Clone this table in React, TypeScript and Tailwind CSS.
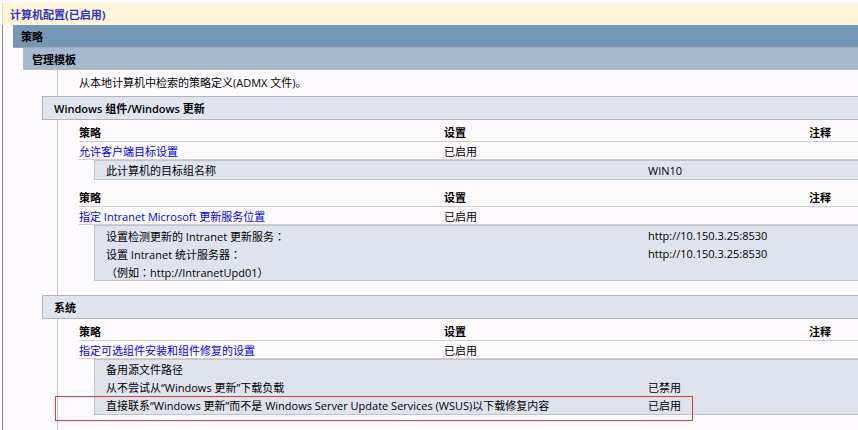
import React from 'react'

// Group Policy result report: computer configuration / administrative templates

type SubRow = { label: React.ReactNode; value?: string }

type PolicyBlock = {
  policy: string
  setting: string
  rows: SubRow[]
}

// full-width punctuation drawn centred, as the report font does
const P = ({ c }: { c: string }) => (
  <span style={{ fontFamily: '"Noto Sans CJK TC", sans-serif' }}>{c}</span>
)

const wuBlocks: PolicyBlock[] = [
  {
    policy: '允许客户端目标设置',
    setting: '已启用',
    rows: [{ label: '此计算机的目标组名称', value: 'WIN10' }],
  },
  {
    policy: '指定 Intranet Microsoft 更新服务位置',
    setting: '已启用',
    rows: [
      { label: <>设置检测更新的 Intranet 更新服务<P c="：" /></>, value: 'http://10.150.3.25:8530' },
      { label: <>设置 Intranet 统计服务器<P c="：" /></>, value: 'http://10.150.3.25:8530' },
      { label: <><P c="（" />例如<P c="：" />http://IntranetUpd01<P c="）" /></> },
    ],
  },
]

const systemBlocks: PolicyBlock[] = [
  {
    policy: '指定可选组件安装和组件修复的设置',
    setting: '已启用',
    rows: [
      { label: '备用源文件路径' },
      { label: '从不尝试从“Windows 更新”下载负载', value: '已禁用' },
      { label: '直接联系“Windows 更新”而不是 Windows Server Update Services (WSUS)以下载修复内容', value: '已启用' },
    ],
  },
]

function Block({ block, className = '' }: { block: PolicyBlock; className?: string }) {
  return (
    <div className={className}>
      {/* header row */}
      <div className="grid grid-cols-[365px_365px_1fr] h-[19px] border-b border-[#cfcfcf] font-bold pt-[1px] leading-[18px]">
        <div>策略</div>
        <div>设置</div>
        <div>注释</div>
      </div>
      {/* policy row */}
      <div className="grid grid-cols-[365px_365px_1fr] h-[18px] border-b border-[#cfcfcf] pt-[1px] leading-[17px]">
        <div className="text-[#0000ff]">{block.policy}</div>
        <div>{block.setting}</div>
        <div />
      </div>
      {/* settings box */}
      <div className="ml-[15px] bg-[#dfe3ee] border-y border-l border-[#c3c3c3] pl-[11px]">
        {block.rows.map((row, i) => (
          <div key={i} className="grid grid-cols-[542px_1fr] h-[18px] pt-[1px] leading-[18px] whitespace-nowrap">
            <div>{row.label}</div>
            <div>{row.value ?? ''}</div>
          </div>
        ))}
      </div>
    </div>
  )
}

function CategoryBar({ title }: { title: string }) {
  return (
    <div className="h-[24px] bg-[#dfe4ee] border-y border-l border-[#b4b4b4] pl-[11px] pt-[1px] leading-[22px] font-semibold">
      {title}
    </div>
  )
}

export default function App() {
  return (
    <div
      className="relative w-[858px] h-[430px] overflow-hidden bg-[#fdfbfd] text-[11px] text-black pt-[3px]"
      style={{ fontFamily: '"Open Sans", "Noto Sans CJK SC", sans-serif' }}
    >
      {/* yellow title bar */}
      <div className="ml-[2px] h-[22px] bg-[#fff5d8] border-l border-[#e0dcc8] pl-[7px] pt-[1px] leading-[22px] font-bold text-[#3030c4]">
        计算机配置(已启用)
      </div>

      <div className="ml-[2px] border-l border-[#8a8a8a] h-full">
        <div className="ml-[10px] h-[23px] bg-[#7397b5] border-b border-[#a9a9a9] pl-[8px] pt-[1px] leading-[22px] font-semibold">
          策略
        </div>
        <div className="ml-[20px] h-[22px] bg-[#a5b9ce] border-b border-[#b9b9b9] pl-[9px] pt-[1px] leading-[21px] font-semibold">
          管理模板
        </div>

        <div className="ml-[39px]">
          <div className="ml-[15px] h-[26px] border-l border-[#c8c8c8] pl-[21px] pt-[4px] leading-[18px]">
            从本地计算机中检索的策略定义(ADMX 文件)。
          </div>

          <CategoryBar title="Windows 组件/Windows 更新" />
          <div className="ml-[15px] border-l border-[#c8c8c8] pl-[21px] pt-[3px] pb-[14px]">
            {wuBlocks.map((b, i) => (
              <Block key={i} block={b} className={i > 0 ? 'mt-[8px]' : ''} />
            ))}
          </div>

          <CategoryBar title="系统" />
          <div className="ml-[15px] border-l border-[#c8c8c8] pl-[21px] pt-[3px] pb-[40px]">
            {systemBlocks.map((b, i) => (
              <Block key={i} block={b} />
            ))}
          </div>
        </div>
      </div>

      {/* red annotation frame */}
      <div className="absolute left-[55px] top-[396px] w-[638px] h-[25px] border border-[#e53935]" />
    </div>
  )
}
